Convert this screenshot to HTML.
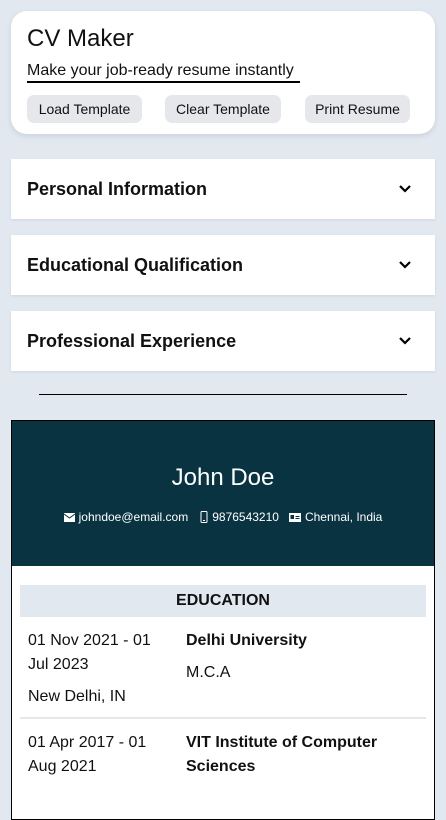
<!DOCTYPE html>
<html><head><style>
*{box-sizing:border-box;margin:0;padding:0}
body{width:446px;height:787px;overflow:hidden;background:#e2e8f0;font-family:"Liberation Sans",sans-serif;color:#111;position:relative}
.card{position:absolute;left:11px;top:11px;width:424px;height:123px;background:#fff;border-radius:16px;box-shadow:0 2px 6px rgba(0,0,0,.1)}
.t{position:absolute;left:16px;top:14px;font-size:24px}
.s{position:absolute;left:16px;top:51px;font-size:16px;border-bottom:2px solid #000;padding-bottom:1px;width:273px;white-space:nowrap}
.b{position:absolute;top:84px;height:28px;background:#e5e7eb;border-radius:7px;font-size:14px;line-height:28px;text-align:center}
.acc{position:absolute;left:11px;width:424px;height:60px;background:#fff;box-shadow:0 1px 3px rgba(0,0,0,.08)}
.acc span{position:absolute;left:16px;top:20px;font-size:18px;font-weight:bold}
.acc svg{position:absolute;left:387px;top:25px}
.hr{position:absolute;left:39px;top:394px;width:368px;height:1px;background:#000}
.res{position:absolute;left:11px;top:420px;width:424px;height:400px;border:1px solid #000;background:#fff}
.hd{height:145px;background:#0a3342;color:#fff;text-align:center}
.nm{padding-top:43px;font-size:24px}
.ct{margin-top:18px;font-size:12px;display:flex;justify-content:center;align-items:center;gap:4px}
.ed{position:absolute;left:8px;top:164px;width:406px;height:32px;background:#e2e8f0;text-align:center;font-weight:bold;font-size:16px;line-height:32px}
.tx{position:absolute;font-size:16px;line-height:24px}
</style></head><body>
<div class="card">
<div class="t">CV Maker</div>
<div class="s">Make your job-ready resume instantly</div>
<div class="b" style="left:16px;width:115px">Load Template</div>
<div class="b" style="left:154px;width:116px">Clear Template</div>
<div class="b" style="left:294px;width:105px">Print Resume</div>
</div>
<div class="acc" style="top:159px"><span>Personal Information</span><svg width="14" height="10" viewBox="0 0 14 10"><path d="M2 2l5 5 5-5" fill="none" stroke="#000" stroke-width="2.2"/></svg></div>
<div class="acc" style="top:235px"><span>Educational Qualification</span><svg width="14" height="10" viewBox="0 0 14 10"><path d="M2 2l5 5 5-5" fill="none" stroke="#000" stroke-width="2.2"/></svg></div>
<div class="acc" style="top:311px"><span>Professional Experience</span><svg width="14" height="10" viewBox="0 0 14 10"><path d="M2 2l5 5 5-5" fill="none" stroke="#000" stroke-width="2.2"/></svg></div>
<div class="hr"></div>
<div class="res">
<div class="hd"><div class="nm">John Doe</div>
<div class="ct"><svg width="11" height="9" viewBox="0 0 11 9"><rect width="11" height="9" fill="#fff"/><path d="M0 1l5.5 4 5.5-4" fill="none" stroke="#0a3342"/></svg><span style="margin-right:8px">johndoe@email.com</span>
<svg width="8" height="12" viewBox="0 0 8 12"><rect x="1" y="0.5" width="6" height="11" rx="1" fill="none" stroke="#fff"/><rect x="3" y="9" width="2" height="1" fill="#fff"/></svg><span style="margin-right:6px">9876543210</span>
<svg width="12" height="9" viewBox="0 0 12 9"><rect width="12" height="9" fill="#fff"/><rect x="1.5" y="2" width="3.5" height="4" fill="#0a3342"/><rect x="6.5" y="3" width="4" height="1" fill="#0a3342"/><rect x="6.5" y="5" width="4" height="1" fill="#0a3342"/></svg><span>Chennai, India</span></div></div>
<div class="ed">EDUCATION</div>
<div class="tx" style="left:16px;top:208px">01 Nov 2021 - 01<br>Jul 2023</div>
<div class="tx" style="left:16px;top:264px">New Delhi, IN</div>
<div class="tx" style="left:174px;top:208px;font-weight:bold">Delhi University</div>
<div class="tx" style="left:174px;top:240px">M.C.A</div>
<div style="position:absolute;left:8px;top:296px;width:406px;height:2px;background:#e5e7eb"></div>
<div class="tx" style="left:16px;top:310px">01 Apr 2017 - 01<br>Aug 2021</div>
<div class="tx" style="left:174px;top:310px;font-weight:bold">VIT Institute of Computer<br>Sciences</div>
</div>
</body></html>
